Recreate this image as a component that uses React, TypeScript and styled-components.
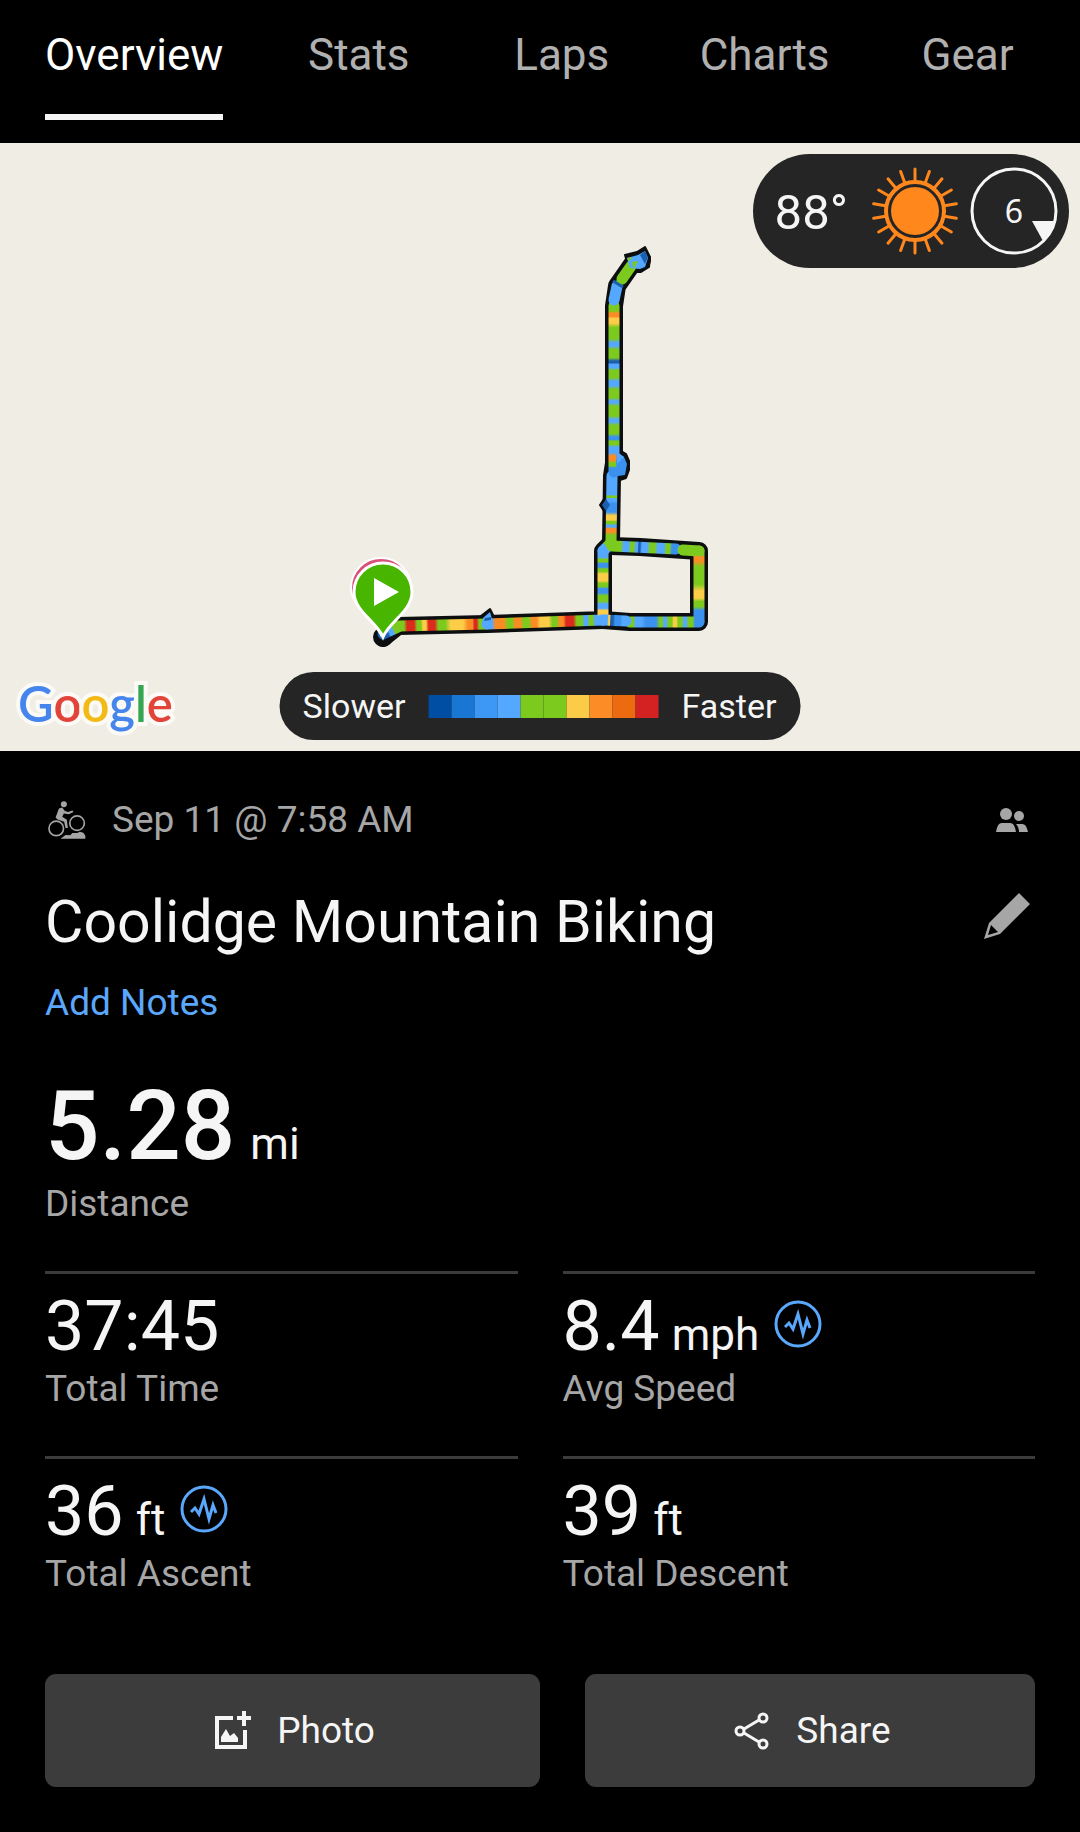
import React, { useId, useState } from "react";
import styled, { createGlobalStyle } from "styled-components";

const color = {
  page: "#000000",
  map: "#f0ede4",
  pill: "#252525",
  text: "#f5f5f5",
  muted: "#a6a6a6",
  link: "#5aa7fb",
  rule: "#3b3b3b",
  button: "#3c3c3c",
  sun: "#ff871c",
};

const GlobalStyle = createGlobalStyle`
  * { box-sizing: border-box; }
  body {
    margin: 0;
    background: ${color.page};
    color: ${color.text};
    font-family: Roboto, "Liberation Sans", sans-serif;
  }
  h1, p, dl, dt, dd { margin: 0; font-weight: 400; }
  button { font-family: inherit; border: 0; padding: 0; background: none; color: inherit; cursor: pointer; }
  svg { display: block; flex-shrink: 0; }
`;

const Tabs = styled.nav`
  display: flex;
  padding: 0 11px 23px;
`;

const Tab = styled.button<{ $active: boolean }>`
  display: flex;
  justify-content: center;
  flex: ${(p) => (p.$active ? "0 0 auto" : "1 1 0")};
  padding: 0 ${(p) => (p.$active ? "34px" : "0")};
  color: ${(p) => (p.$active ? "#ffffff" : "#b0b0b0")};
  font-size: 44px;
`;

const TabLabel = styled.span<{ $active: boolean }>`
  height: 120px;
  line-height: 110px;
  border-bottom: 6px solid ${(p) => (p.$active ? color.text : "transparent")};
`;

const MapArea = styled.section`
  position: relative;
  height: 608px;
  background: ${color.map};
`;

const RouteCanvas = styled.svg`
  width: 100%;
  height: 100%;
`;

const Weather = styled.div`
  position: absolute;
  top: 11px;
  right: 11px;
  display: flex;
  align-items: center;
  height: 114px;
  padding: 0 11px 0 22px;
  border-radius: 57px;
  background: ${color.pill};
`;

const Temperature = styled.span`
  margin-right: 23px;
  font-size: 49px;
  line-height: 56px;
  padding-top: 3px;
`;

const Wind = styled.div`
  display: grid;
  place-items: center;
  margin-left: 11px;
  > * { grid-area: 1 / 1; }
`;

const WindSpeed = styled.span`
  font-family: "Noto Sans", sans-serif;
  font-size: 32px;
  line-height: 40px;
`;

const Legend = styled.div`
  position: absolute;
  bottom: 11px;
  left: 50%;
  transform: translateX(-50%);
  display: flex;
  align-items: center;
  gap: 23px;
  height: 68px;
  padding: 0 24px 0 23px;
  border-radius: 34px;
  background: ${color.pill};
  font-size: 34px;
`;

const Scale = styled.div`
  display: flex;
`;

const Swatch = styled.span<{ $fill: string }>`
  width: 23px;
  height: 23px;
  background: ${(p) => p.$fill};
`;

const Brand = styled.div`
  position: absolute;
  left: 18px;
  bottom: 18px;
  font-family: Lato, sans-serif;
  font-size: 49px;
  font-weight: 600;
  line-height: 60px;
  -webkit-text-stroke: 8px #fbfaf6;
  paint-order: stroke fill;
`;

const Letter = styled.span<{ $fill: string }>`
  color: ${(p) => p.$fill};
`;

const Details = styled.main`
  display: flex;
  flex-direction: column;
  padding: 45px;
`;

const Row = styled.div`
  display: flex;
  align-items: center;
  justify-content: space-between;
`;

const Meta = styled.div`
  display: flex;
  align-items: center;
  gap: 26px;
  padding-left: 3px;
  color: ${color.muted};
  font-size: 37px;
  line-height: 48px;
`;

const IconButton = styled.button`
  color: ${color.muted};
`;

const TitleRow = styled(Row)`
  margin-top: 42px;
`;

const Title = styled.h1`
  font-size: 59px;
  line-height: 72px;
`;

const NotesButton = styled.button`
  align-self: flex-start;
  margin-top: 21px;
  color: ${color.link};
  font-size: 37px;
  line-height: 48px;
`;

const Summary = styled.dl`
  margin-top: 51px;
`;

const Metrics = styled.dl`
  display: grid;
  grid-template-columns: 1fr 1fr;
  gap: 43px 45px;
  margin-top: 43px;
`;

const Metric = styled.div<{ $ruled?: boolean; $gap: number }>`
  display: flex;
  flex-direction: column-reverse;
  gap: ${(p) => p.$gap}px;
  padding-top: ${(p) => (p.$ruled ? "16px" : "0")};
  border-top: ${(p) => (p.$ruled ? `3px solid ${color.rule}` : "0")};
`;

const MetricLabel = styled.dt`
  color: ${color.muted};
  font-size: 37px;
  line-height: 48px;
`;

const MetricValue = styled.dd<{ $large?: boolean }>`
  display: flex;
  align-items: baseline;
  gap: ${(p) => (p.$large ? "15px" : "12px")};
  height: ${(p) => (p.$large ? "96px" : "72px")};
  font-size: ${(p) => (p.$large ? "96px" : "70px")};
  font-weight: ${(p) => (p.$large ? 500 : 400)};
  line-height: ${(p) => (p.$large ? "96px" : "72px")};
  > svg { align-self: center; }
`;

const Unit = styled.span`
  font-size: 44px;
  font-weight: 400;
  line-height: 48px;
`;

const Actions = styled.div`
  display: grid;
  grid-template-columns: 11fr 10fr;
  gap: 45px;
  margin-top: 76px;
`;

const Action = styled.button`
  display: flex;
  align-items: center;
  justify-content: center;
  gap: 24px;
  height: 113px;
  padding-left: 3px;
  border-radius: 11px;
  background: ${color.button};
  font-size: 37px;
`;

const BLUE = "#55a8ff";
const MID = "#3b92ee";
const DEEP = "#1b5fae";
const GREEN = "#7dca1e";
const YELLOW = "#fdcd47";
const ORANGE = "#fb8b24";
const RED = "#dc2a1c";

type Point = [number, number];
type Band = [number, string];

/* One stretch of the route; each band gives its length weight and pace colour. */
function Leg({ from, to, bands }: { from: Point; to: Point; bands: Band[] }) {
  const id = useId();
  const total = bands.reduce((sum, b) => sum + b[0], 0);
  let at = 0;
  const stops = bands.flatMap(([size, fill], i) => {
    const start = (at + size * 0.18) / total;
    const end = (at + size * 0.82) / total;
    at += size;
    return [
      <stop key={`${i}a`} offset={start} stopColor={fill} />,
      <stop key={`${i}b`} offset={end} stopColor={fill} />,
    ];
  });
  return (
    <>
      <linearGradient id={id} gradientUnits="userSpaceOnUse" x1={from[0]} y1={from[1]} x2={to[0]} y2={to[1]}>
        {stops}
      </linearGradient>
      <path
        d={`M${from[0]} ${from[1]}L${to[0] + 0.01} ${to[1] + 0.01}`}
        stroke={`url(#${id})`}
        strokeWidth="11"
        strokeLinecap="round"
        fill="none"
      />
    </>
  );
}

const routeOutline =
  "M383 638L398 626L487 624L603 620V551L611 543L612 476L614 463V306L617 286L633 263L642 260";
const loopOutline = "M611 546L640 547L699 551V622H630L603 620";

function Route() {
  return (
    <RouteCanvas viewBox="0 143 1080 608" preserveAspectRatio="xMidYMid slice" role="img" aria-label="Route map">
      <g fill="none" stroke="#0c0e10" strokeWidth="18" strokeLinejoin="round" strokeLinecap="round">
        <path d={routeOutline} />
        <path d={loopOutline} />
      </g>
      <g fill="#0c0e10" stroke="#0c0e10" strokeWidth="2" strokeLinejoin="round">
        <path d="M625 255L637 252L645 247L650 257L649 267L641 272L630 272Z" />
        <path d="M618 449L626 454L629 461V470L626 478L620 480L608 476Z" />
        <path d="M606 496L600 505L606 514Z" />
        <path d="M481 616L490 609L494 617L489 630L482 627Z" />
        <circle cx="383" cy="637" r="9" />
      </g>
      <Leg from={[383, 634]} to={[398, 627]} bands={[[1, DEEP], [1, BLUE], [1, GREEN]]} />
      <Leg
        from={[398, 626]}
        to={[487, 624]}
        bands={[[6, GREEN], [9, RED], [5, GREEN], [4, YELLOW], [8, RED], [9, GREEN], [16, YELLOW], [6, ORANGE], [3, RED], [8, GREEN]]}
      />
      <Leg
        from={[487, 624]}
        to={[603, 620]}
        bands={[[5, BLUE], [11, ORANGE], [6, GREEN], [7, ORANGE], [7, GREEN], [6, ORANGE], [11, YELLOW], [6, GREEN], [5, ORANGE], [9, RED], [7, GREEN], [4, BLUE], [4, GREEN], [8, BLUE]]}
      />
      <Leg
        from={[603, 620]}
        to={[603, 551]}
        bands={[[5, BLUE], [6, YELLOW], [7, BLUE], [9, GREEN], [7, MID], [5, GREEN], [11, YELLOW], [4, GREEN], [6, MID], [4, GREEN], [8, BLUE]]}
      />
      <Leg from={[603, 551]} to={[611, 543]} bands={[[2, BLUE], [2, GREEN]]} />
      <Leg
        from={[612, 546]}
        to={[676, 549]}
        bands={[[10, GREEN], [7, BLUE], [5, GREEN], [3, BLUE], [2, DEEP], [8, BLUE], [7, GREEN], [9, BLUE], [5, GREEN], [5, MID]]}
      />
      <Leg from={[683, 550]} to={[699, 551]} bands={[[3, GREEN], [8, GREEN]]} />
      <Leg
        from={[699, 551]}
        to={[699, 621]}
        bands={[[5, GREEN], [6, ORANGE], [27, GREEN], [11, YELLOW], [8, GREEN], [13, MID]]}
      />
      <Leg
        from={[699, 622]}
        to={[630, 622]}
        bands={[[5, MID], [7, GREEN], [4, BLUE], [6, GREEN], [4, YELLOW], [6, GREEN], [4, BLUE], [4, GREEN], [16, MID], [9, BLUE], [4, GREEN]]}
      />
      <Leg from={[626, 621]} to={[603, 620]} bands={[[5, BLUE], [9, MID], [4, DEEP], [2, YELLOW], [6, BLUE]]} />
      <Leg
        from={[611, 543]}
        to={[612, 476]}
        bands={[[9, GREEN], [5, ORANGE], [3, BLUE], [3, GREEN], [6, YELLOW], [12, MID], [3, BLUE], [2, GREEN], [6, BLUE], [12, BLUE]]}
      />
      <Leg
        from={[614, 472]}
        to={[614, 306]}
        bands={[
          [5, MID], [5, GREEN], [7, ORANGE], [9, BLUE], [5, GREEN], [4, MID], [13, GREEN], [4, BLUE], [15, GREEN], [3, BLUE],
          [13, GREEN], [7, BLUE], [11, GREEN], [5, BLUE], [3, DEEP], [13, GREEN], [5, BLUE], [17, GREEN], [7, YELLOW], [5, ORANGE], [6, GREEN],
        ]}
      />
      <Leg from={[614, 300]} to={[617, 286]} bands={[[12, BLUE], [5, BLUE]]} />
      <Leg from={[622, 279]} to={[631, 266]} bands={[[3, GREEN], [4, GREEN]]} />
      <path d="M613 281L623 287" stroke={DEEP} strokeWidth="3" />
      <path d="M627 258L638 255L645 251L648 258L645 267L640 269L630 268Z" fill={BLUE} />
      <path d="M640 255L645 251L648 257L645 264Z" fill={DEEP} />
      <path d="M627 258L632 257L629 262Z" fill={GREEN} />
      <path d="M632 262L638 261L634 269Z" fill={GREEN} />
      <path d="M617 452L624 457L627 464L625 475L618 476L616 463Z" fill={MID} />
      <path d="M617 452L624 457L617 464Z" fill={BLUE} />
      <path d="M606 499L602 505L606 511L610 505Z" fill={DEEP} />
      <path d="M483 618L490 612L492 619L488 628L483 626Z" fill={BLUE} />
      <path d="M485 618L491 617L491 620L484 621Z" fill={DEEP} />
      <g transform="translate(-2 -3)">
        <path d="M383 638C375 622 353 609 353 591A30 30 0 0 1 413 591C413 609 391 622 383 638Z" fill="#d8517a" stroke="#ffffff" strokeWidth="2" />
      </g>
      <path
        d="M383 637C376 621 354 611 354 592A29 29 0 0 1 412 592C412 611 390 621 383 637Z"
        fill="#48b500"
        stroke="#ffffff"
        strokeWidth="3"
      />
      <path d="M374 578L399 592L374 606Z" fill="#ffffff" />
    </RouteCanvas>
  );
}

function SunIcon() {
  return (
    <svg width="88" height="88" viewBox="-44 -44 88 88" aria-hidden="true">
      <circle r="24" fill={color.sun} />
      <circle r="29" fill="none" stroke={color.sun} strokeWidth="4" />
      {Array.from({ length: 18 }, (_, i) => (
        <path key={i} d="M0 -30V-42" stroke={color.sun} strokeWidth="3" strokeLinecap="round" transform={`rotate(${i * 20})`} />
      ))}
    </svg>
  );
}

function WindDial() {
  return (
    <svg width="88" height="88" viewBox="-44 -44 88 88" aria-hidden="true">
      <circle r="42" fill="none" stroke={color.text} strokeWidth="3" />
      <path d="M18 10H42L38 20L29 30Z" fill={color.text} />
    </svg>
  );
}

function MountainBikeIcon() {
  return (
    <svg width="38" height="38" viewBox="145 91 115 115" fill="currentColor" aria-hidden="true">
      <circle cx="193" cy="101" r="9" />
      <g fill="none" stroke="currentColor" strokeWidth="5">
        <circle cx="170" cy="174" r="22" />
        <circle cx="233" cy="158" r="22" />
      </g>
      <path d="M178 114L188 111L196 121L206 124L219 120L222 124L208 131L193 129L188 139L202 148L205 173L198 173L194 154L174 147L168 141Z" />
      <path d="M183 205L198 194L212 195L219 188L234 188L241 184L252 187L258 196V205Z" />
    </svg>
  );
}

function PeopleIcon() {
  return (
    <svg width="40" height="26" viewBox="0 0 40 26" fill="currentColor" aria-hidden="true">
      <circle cx="11" cy="7" r="6" />
      <circle cx="24" cy="9" r="5" />
      <path d="M1 25C2 20 3 16 7 16H15C19 16 20 20 21 25Z" />
      <path d="M21 17H27C31 17 32 21 33 25H24C24 22 23 19 21 17Z" />
    </svg>
  );
}

function PencilIcon() {
  return (
    <svg width="52" height="60" viewBox="0 0 52 60" fill="currentColor" aria-hidden="true">
      <path fillRule="evenodd" d="M36 1L47 12L17 42L1 47L6 31ZM8 33L5 43L15 40Z" />
    </svg>
  );
}

function PulseIcon() {
  return (
    <svg width="51" height="52" viewBox="-3 0 51 52" fill="none" stroke={color.link} strokeWidth="3" aria-hidden="true">
      <circle cx="24" cy="24" r="22" />
      <path d="M11 27L15 23L19 29L24 14L29 34L33 20L36 28" strokeMiterlimit="10" />
    </svg>
  );
}

function PhotoIcon() {
  return (
    <svg width="40" height="40" viewBox="0 1 40 40" fill="none" stroke="currentColor" strokeWidth="4" aria-hidden="true">
      <path d="M20 8H4V37H32V20" />
      <path d="M31 1V16M24 8H38" />
      <path d="M8 32V27L13 19L17 26L21 23L25 28V32Z" fill="currentColor" stroke="none" />
    </svg>
  );
}

function ShareIcon() {
  return (
    <svg width="40" height="40" viewBox="0 0 40 40" fill="none" stroke="currentColor" strokeWidth="3" aria-hidden="true">
      <circle cx="8" cy="20" r="4" />
      <circle cx="31" cy="7" r="4" />
      <circle cx="31" cy="33" r="4" />
      <path d="M12 18L27 9M12 22L27 31" />
    </svg>
  );
}

const tabs = ["Overview", "Stats", "Laps", "Charts", "Gear"];
const scale = ["#004da4", "#1976d2", "#3d97f4", "#55a8ff", GREEN, GREEN, "#fccc48", "#fb8c26", "#ec6a10", "#d42121"];
const brand: [string, string][] = [
  ["G", "#4685ec"],
  ["o", "#e2443a"],
  ["o", "#f3ba15"],
  ["g", "#4685ec"],
  ["l", "#36a654"],
  ["e", "#e2443a"],
];
const metrics = [
  { label: "Total Time", value: "37:45" },
  { label: "Avg Speed", value: "8.4", unit: "mph", pulse: true },
  { label: "Total Ascent", value: "36", unit: "ft", pulse: true },
  { label: "Total Descent", value: "39", unit: "ft" },
];

export default function App() {
  const [active, setActive] = useState("Overview");
  return (
    <>
      <GlobalStyle />
      <Tabs aria-label="Activity sections">
        {tabs.map((name) => (
          <Tab key={name} $active={name === active} onClick={() => setActive(name)}>
            <TabLabel $active={name === active}>{name}</TabLabel>
          </Tab>
        ))}
      </Tabs>
      <MapArea>
        <Route />
        <Weather>
          <Temperature>88°</Temperature>
          <SunIcon />
          <Wind>
            <WindDial />
            <WindSpeed>6</WindSpeed>
          </Wind>
        </Weather>
        <Brand>
          {brand.map(([char, fill], i) => (
            <Letter key={i} $fill={fill}>{char}</Letter>
          ))}
        </Brand>
        <Legend>
          <span>Slower</span>
          <Scale>
            {scale.map((fill, i) => (
              <Swatch key={i} $fill={fill} />
            ))}
          </Scale>
          <span>Faster</span>
        </Legend>
      </MapArea>
      <Details>
        <Row>
          <Meta>
            <MountainBikeIcon />
            <p>Sep 11 @ 7:58 AM</p>
          </Meta>
          <IconButton aria-label="Visibility">
            <PeopleIcon />
          </IconButton>
        </Row>
        <TitleRow>
          <Title>Coolidge Mountain Biking</Title>
          <IconButton aria-label="Edit title">
            <PencilIcon />
          </IconButton>
        </TitleRow>
        <NotesButton>Add Notes</NotesButton>
        <Summary>
          <Metric $gap={6}>
            <MetricLabel>Distance</MetricLabel>
            <MetricValue $large>
              5.28 <Unit>mi</Unit>
            </MetricValue>
          </Metric>
        </Summary>
        <Metrics>
          {metrics.map((m) => (
            <Metric key={m.label} $ruled $gap={3}>
              <MetricLabel>{m.label}</MetricLabel>
              <MetricValue>
                {m.value}
                {m.unit && <Unit>{m.unit}</Unit>}
                {m.pulse && <PulseIcon />}
              </MetricValue>
            </Metric>
          ))}
        </Metrics>
        <Actions>
          <Action>
            <PhotoIcon />
            Photo
          </Action>
          <Action>
            <ShareIcon />
            Share
          </Action>
        </Actions>
      </Details>
    </>
  );
}
